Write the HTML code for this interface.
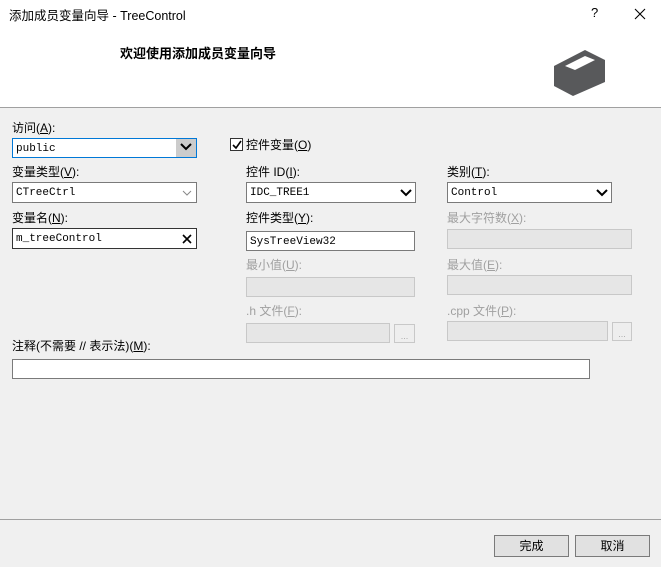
<!DOCTYPE html>
<html><head><meta charset="utf-8"><style>
*{margin:0;padding:0;box-sizing:border-box}
body{width:661px;height:567px;background:#f0f0f0;position:relative;overflow:hidden;font-family:"Liberation Sans","Noto Sans CJK SC",sans-serif;font-size:12px;color:#000}
.a{position:absolute;white-space:nowrap}
.hdr{position:absolute;left:0;top:0;width:661px;height:108px;background:#fff;border-bottom:1px solid #a0a0a0}
.lbl{position:absolute;font-size:12px;line-height:14px;white-space:nowrap}
.dis{color:#a0a0a0}
.box{position:absolute;background:#fff;border:1px solid #7a7a7a;font-family:"Liberation Mono",monospace;font-size:11px;display:flex;align-items:center;padding-left:3px;padding-top:1px}
.dbox{position:absolute;background:#e6e6e6;border:1px solid #c8c8c8}
.btn{position:absolute;background:#e1e1e1;border:1px solid #adadad;text-align:center;font-size:12px;line-height:20px}
u{text-decoration:underline}
</style></head><body>
<div class="hdr"></div>
<div class="a" style="left:9px;top:5px;font-size:12.5px;color:#000">添加成员变量向导 - TreeControl</div>
<div class="a" style="left:591px;top:5px;font-size:13px">?</div>
<svg class="a" style="left:634px;top:8px" width="12" height="12"><path d="M1 1L11 11M11 1L1 11" stroke="#000" stroke-width="1.1"/></svg>
<div class="a" style="left:120px;top:43px;font-size:13px;font-weight:bold">欢迎使用添加成员变量向导</div>
<svg class="a" style="left:550px;top:46px" width="60" height="52">
<polygon points="35,4 55,14 55,36 23,50 4,40 4,20" fill="#58595b"/>
<polygon points="15,20 35,10 45,14 25,24" fill="#fff"/>
</svg>

<div class="lbl" style="left:12px;top:121px">访问(<u>A</u>):</div>
<div class="box" style="left:12px;top:138px;width:185px;height:20px;border-color:#0078d7">public</div>
<div class="a" style="left:176px;top:139px;width:20px;height:18px;background:#ccc"></div>
<svg class="a" style="left:180px;top:143px" width="12" height="8"><path d="M1 1L6 6L11 1" stroke="#000" stroke-width="2" fill="none"/></svg>

<div class="a" style="left:230px;top:138px;width:13px;height:13px;background:#fff;border:1px solid #333"></div>
<svg class="a" style="left:232px;top:140px" width="10" height="10"><path d="M1 5L4 8L9 1" stroke="#000" stroke-width="1.6" fill="none"/></svg>
<div class="lbl" style="left:246px;top:138px">控件变量(<u>O</u>)</div>

<div class="lbl" style="left:12px;top:165px">变量类型(<u>V</u>):</div>
<div class="box" style="left:12px;top:182px;width:185px;height:21px">CTreeCtrl</div>
<svg class="a" style="left:182px;top:190px" width="10" height="6"><path d="M1 1L5 5L9 1" stroke="#888" stroke-width="1" fill="none"/></svg>
<div class="lbl" style="left:12px;top:211px">变量名(<u>N</u>):</div>
<div class="box" style="left:12px;top:228px;width:185px;height:21px;border-color:#333">m_treeControl</div>
<svg class="a" style="left:182px;top:234px" width="10" height="10"><path d="M1 1L9 9M9 1L1 9" stroke="#000" stroke-width="1.6"/></svg>

<div class="lbl" style="left:246px;top:165px">控件 ID(<u>I</u>):</div>
<div class="box" style="left:246px;top:182px;width:170px;height:21px">IDC_TREE1</div>
<svg class="a" style="left:400px;top:189px" width="12" height="8"><path d="M1 1L6 6L11 1" stroke="#000" stroke-width="2" fill="none"/></svg>
<div class="lbl" style="left:246px;top:211px">控件类型(<u>Y</u>):</div>
<div class="box" style="left:246px;top:231px;width:169px;height:20px">SysTreeView32</div>
<div class="lbl dis" style="left:246px;top:258px">最小值(<u>U</u>):</div>
<div class="dbox" style="left:246px;top:277px;width:169px;height:20px"></div>
<div class="lbl dis" style="left:246px;top:304px">.h 文件(<u>F</u>):</div>
<div class="dbox" style="left:246px;top:323px;width:144px;height:20px"></div>
<div class="dbox" style="left:394px;top:324px;width:21px;height:19px;background:#eee;color:#aaa;font-size:9px;text-align:center;line-height:22px">...</div>

<div class="lbl" style="left:447px;top:165px">类别(<u>T</u>):</div>
<div class="box" style="left:447px;top:182px;width:165px;height:21px">Control</div>
<svg class="a" style="left:596px;top:189px" width="12" height="8"><path d="M1 1L6 6L11 1" stroke="#000" stroke-width="2" fill="none"/></svg>
<div class="lbl dis" style="left:447px;top:211px">最大字符数(<u>X</u>):</div>
<div class="dbox" style="left:447px;top:229px;width:185px;height:20px"></div>
<div class="lbl dis" style="left:447px;top:258px">最大值(<u>E</u>):</div>
<div class="dbox" style="left:447px;top:275px;width:185px;height:20px"></div>
<div class="lbl dis" style="left:447px;top:304px">.cpp 文件(<u>P</u>):</div>
<div class="dbox" style="left:447px;top:321px;width:161px;height:20px"></div>
<div class="dbox" style="left:612px;top:322px;width:20px;height:19px;background:#eee;color:#aaa;font-size:9px;text-align:center;line-height:22px">...</div>

<div class="lbl" style="left:12px;top:339px">注释(不需要 // 表示法)(<u>M</u>):</div>
<div class="box" style="left:12px;top:359px;width:578px;height:20px"></div>

<div class="a" style="left:0;top:519px;width:661px;height:1px;background:#a0a0a0"></div>
<div class="btn" style="left:494px;top:535px;width:75px;height:22px;border-color:#7a7a7a">完成</div>
<div class="btn" style="left:575px;top:535px;width:75px;height:22px;border-color:#7a7a7a">取消</div>
</body></html>
